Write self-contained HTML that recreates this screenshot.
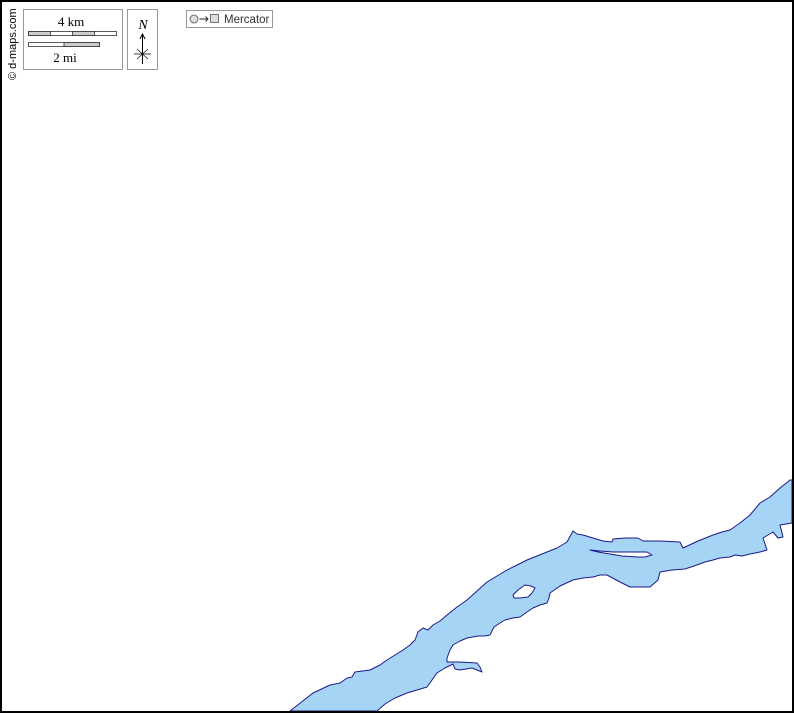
<!DOCTYPE html>
<html><head><meta charset="utf-8"><style>
html,body{margin:0;padding:0;background:#fff;}
svg{display:block;}
</style></head><body>
<svg width="794" height="713" viewBox="0 0 794 713" xmlns="http://www.w3.org/2000/svg">
<rect x="0" y="0" width="794" height="713" fill="#fff"/>
<path fill="#a6d4f5" stroke="#1a1a8c" stroke-width="1" stroke-linejoin="round" fill-rule="evenodd" d="
M290,711 L313,693 L330,685 L340,683 L347,678 L352,677 L355,672 L370,670 L380,665 L387,660 L395,655 L403,650 L410,645 L415,640 L418,632 L423,628 L428,630 L433,625 L440,621 L447,615 L457,607 L467,600 L477,591 L487,582 L497,576 L507,570 L517,565 L527,560 L537,556 L547,552 L557,548 L567,542 L573,531 L577,534 L583,535 L593,538 L603,541 L612,542 L613,539 L625,538 L638,538 L643,541 L660,541 L680,542 L683,548 L698,541 L713,535 L722,532 L730,530 L740,523 L750,515 L760,503 L770,497 L780,488 L790,480 L792,480 L792,523 L780,525 L783,537 L778,538 L773,532 L763,538 L767,550 L760,552 L750,554 L742,556 L735,555 L730,557 L720,558 L713,560 L705,562 L697,565 L685,569 L672,570 L660,572 L658,580 L650,587 L640,587 L630,587 L620,582 L607,575 L600,575 L593,577 L583,578 L573,580 L560,586 L550,593 L549,598 L547,603 L540,605 L533,608 L527,612 L520,617 L513,618 L505,620 L500,623 L494,627 L490,635 L485,636 L478,636 L467,638 L460,641 L453,645 L450,650 L447,658 L447,662 L460,662 L477,663 L480,667 L482,672 L472,668 L460,670 L455,669 L453,664 L445,668 L437,673 L432,680 L427,687 L417,690 L407,693 L395,698 L385,704 L377,711 Z
M513,595 L518,590 L525,585 L531,586 L535,588 L532,593 L528,597 L520,598 L514,598 Z
M590,550 L600,551 L613,552 L630,552 L647,552 L652,555 L645,557 L637,557 L622,556 L610,554 L598,552 Z"/>
<rect x="1" y="1" width="792" height="711" fill="none" stroke="#000" stroke-width="2"/>
<text transform="translate(16,80) rotate(-90)" font-family="Liberation Sans, sans-serif" font-size="11" fill="#000">© d-maps.com</text>
<rect x="23.5" y="9.5" width="99" height="60" fill="#fff" stroke="#999"/>
<text x="71" y="26" text-anchor="middle" font-family="Liberation Serif, serif" font-size="13">4 km</text>
<rect x="28.5" y="31.5" width="88" height="4" fill="#fff" stroke="#333" stroke-width="0.8"/>
<rect x="28.5" y="31.5" width="22" height="4" fill="#ccc" stroke="#333" stroke-width="0.8"/>
<rect x="72.5" y="31.5" width="22" height="4" fill="#ccc" stroke="#333" stroke-width="0.8"/>
<rect x="28.5" y="42.5" width="71" height="4" fill="#fff" stroke="#333" stroke-width="0.8"/>
<rect x="64" y="42.5" width="35.5" height="4" fill="#ccc" stroke="#333" stroke-width="0.8"/>
<text x="65" y="62" text-anchor="middle" font-family="Liberation Serif, serif" font-size="13">2 mi</text>
<rect x="127.5" y="9.5" width="30" height="60" fill="#fff" stroke="#999"/>
<text x="143" y="29" text-anchor="middle" font-family="Liberation Serif, serif" font-style="italic" font-size="14">N</text>
<line x1="142.5" y1="35" x2="142.5" y2="64" stroke="#000"/>
<path d="M140,39 L142.5,34 L145,39" fill="none" stroke="#000"/>
<line x1="134" y1="54" x2="151" y2="54" stroke="#000" stroke-width="0.8"/>
<line x1="137" y1="49" x2="148" y2="59" stroke="#000" stroke-width="0.6"/>
<line x1="148" y1="49" x2="137" y2="59" stroke="#000" stroke-width="0.6"/>
<rect x="186.5" y="10.5" width="86" height="17" fill="#fff" stroke="#999"/>
<circle cx="194" cy="19" r="4" fill="#ddd" stroke="#555" stroke-width="0.8"/>
<path d="M199.5,19 L208,19 M205.5,16.5 L208,19 L205.5,21.5" fill="none" stroke="#222" stroke-width="0.9"/>
<rect x="210.5" y="14.5" width="8" height="8" fill="#ddd" stroke="#555" stroke-width="0.8"/>
<text x="224" y="23" font-family="Liberation Sans, sans-serif" font-size="11.5" fill="#333">Mercator</text>
</svg>
</body></html>
